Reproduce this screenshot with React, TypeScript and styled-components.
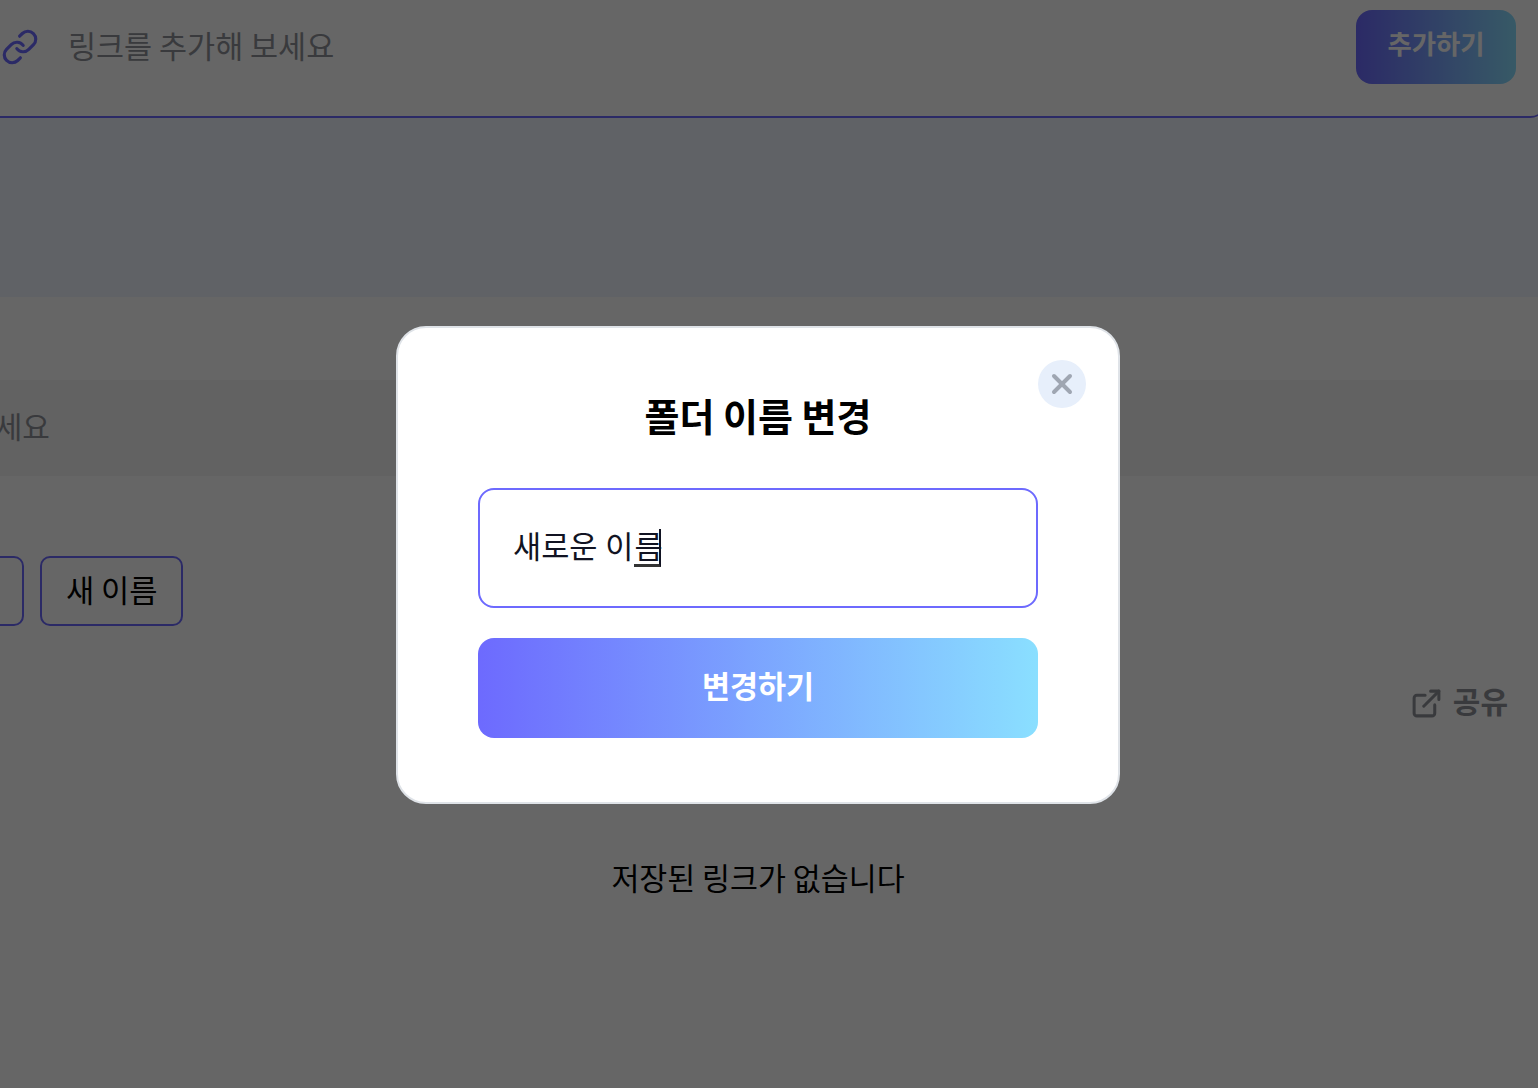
import React from 'react';
import styled, { createGlobalStyle } from 'styled-components';
import { ExternalLink, Link, X } from 'lucide-react';

const GlobalStyle = createGlobalStyle`
  * {
    box-sizing: border-box;
  }

  body {
    margin: 0;
    background-color: #fff;
    font-family: 'Noto Sans CJK KR', 'Noto Sans', sans-serif;
  }
`;

const Page = styled.div`
  height: 1088px;
  overflow: hidden;
`;

const AddBar = styled.form`
  display: flex;
  align-items: flex-start;
  height: 118px;
  margin-right: -8px;
  padding: 10px 30px 0 3px;
  background-color: #fff;
  border-bottom: 2px solid #6d6afe;
  border-bottom-right-radius: 16px;
`;

const AddIcon = styled(Link)`
  flex-shrink: 0;
  margin: 18px 29px 0 -2px;
  color: #6d6afe;
`;

const AddPlaceholder = styled.span`
  flex: 1;
  margin-top: 14px;
  color: #8f9298;
  font-size: 30.5px;
  line-height: 42px;
`;

const AddButton = styled.button`
  width: 160px;
  height: 74px;
  padding: 0 0 9px;
  border: none;
  border-radius: 16px;
  background: linear-gradient(90deg, #6d6afe, #8adfff);
  color: #fff;
  font-family: inherit;
  font-size: 26.4px;
  font-weight: 600;
`;

const Hero = styled.div`
  height: 179px;
  background-color: #f0f6ff;
`;

const Band = styled.div`
  height: 83px;
  background-color: #fff;
`;

const Main = styled.main`
  display: flex;
  flex-direction: column;
`;

const SearchBar = styled.div`
  display: flex;
  align-items: flex-start;
  height: 96px;
  padding: 22px 0 0;
  background-color: #f5f5f5;
`;

const SearchText = styled.span`
  margin-left: -212px;
  color: #8f9298;
  font-size: 30px;
  line-height: 46px;
  white-space: nowrap;
`;

const ChipRow = styled.div`
  display: flex;
  gap: 16px;
  margin: 80px 0 0 -83px;
`;

const Chip = styled.button`
  height: 70px;
  padding: 0 23.5px 6px;
  border: 2px solid #6d6afe;
  border-radius: 10px;
  background-color: #fff;
  color: #000;
  font-family: inherit;
  font-size: 30.7px;
  white-space: nowrap;
`;

const ShareRow = styled.div`
  display: flex;
  justify-content: flex-end;
  align-items: center;
  gap: 10px;
  margin-top: 52px;
  padding-right: 30px;
  color: #8f9298;
  font-size: 30px;
  font-weight: 600;
  line-height: 44px;
`;

const ShareIcon = styled(ExternalLink)`
  margin-top: 6px;
`;

const EmptyText = styled.p`
  margin: 132px 22px 0 0;
  color: #000;
  font-size: 30.4px;
  line-height: 46px;
  text-align: center;
`;

const Overlay = styled.div`
  position: fixed;
  inset: 0;
  padding: 326px 0 0 396px;
  background-color: rgba(0, 0, 0, 0.6);
`;

const Modal = styled.div`
  position: relative;
  display: flex;
  flex-direction: column;
  align-items: center;
  width: 724px;
  height: 478px;
  padding: 61px 80px 0;
  background-color: #fff;
  border: 2px solid #dfe3e8;
  border-radius: 30px;
`;

const CloseButton = styled.button`
  position: absolute;
  top: 32px;
  right: 32px;
  display: flex;
  align-items: center;
  justify-content: center;
  width: 48px;
  height: 48px;
  padding: 0;
  border: none;
  border-radius: 50%;
  background-color: #e7effb;
  color: #9fa6b2;
`;

const ModalTitle = styled.h2`
  margin: 0;
  color: #000;
  font-size: 38px;
  font-weight: 700;
  line-height: 52px;
`;

const NameField = styled.div`
  display: flex;
  align-items: center;
  width: 100%;
  height: 120px;
  margin-top: 47px;
  padding: 0 33px 6px;
  border: 2px solid #6d6afe;
  border-radius: 16px;
  color: #111322;
  font-size: 30.6px;
  word-spacing: 1px;
  white-space: pre;
`;

const Composing = styled.span`
  display: inline-block;
  width: 27px;
  height: 38px;
  margin: 5px 0 0 1px;
  line-height: 32px;
  border-bottom: 3px solid #333;
  border-right: 2px solid #111322;
`;

const SubmitButton = styled.button`
  width: 100%;
  height: 100px;
  margin-top: 30px;
  padding: 0 0 6px;
  border: none;
  border-radius: 16px;
  background: linear-gradient(90deg, #6d6afe, #8adfff);
  color: #fff;
  font-family: inherit;
  font-size: 30.5px;
  font-weight: 600;
`;

export default function App() {
  return (
    <>
      <GlobalStyle />
      <Page>
        <AddBar>
          <AddIcon size={38} strokeWidth={2} />
          <AddPlaceholder>링크를 추가해 보세요</AddPlaceholder>
          <AddButton type="button">추가하기</AddButton>
        </AddBar>
        <Hero />
        <Band />
        <Main>
          <SearchBar>
            <SearchText>링크를 검색해 보세요</SearchText>
          </SearchBar>
          <ChipRow>
            <Chip>전체</Chip>
            <Chip>새 이름</Chip>
          </ChipRow>
          <ShareRow>
            <ShareIcon size={33} strokeWidth={2.2} />
            공유
          </ShareRow>
          <EmptyText>저장된 링크가 없습니다</EmptyText>
        </Main>
      </Page>
      <Overlay>
        <Modal>
          <CloseButton aria-label="닫기">
            <X size={32} strokeWidth={3} />
          </CloseButton>
          <ModalTitle>폴더 이름 변경</ModalTitle>
          <NameField>
            새로운 이<Composing>름</Composing>
          </NameField>
          <SubmitButton>변경하기</SubmitButton>
        </Modal>
      </Overlay>
    </>
  );
}
